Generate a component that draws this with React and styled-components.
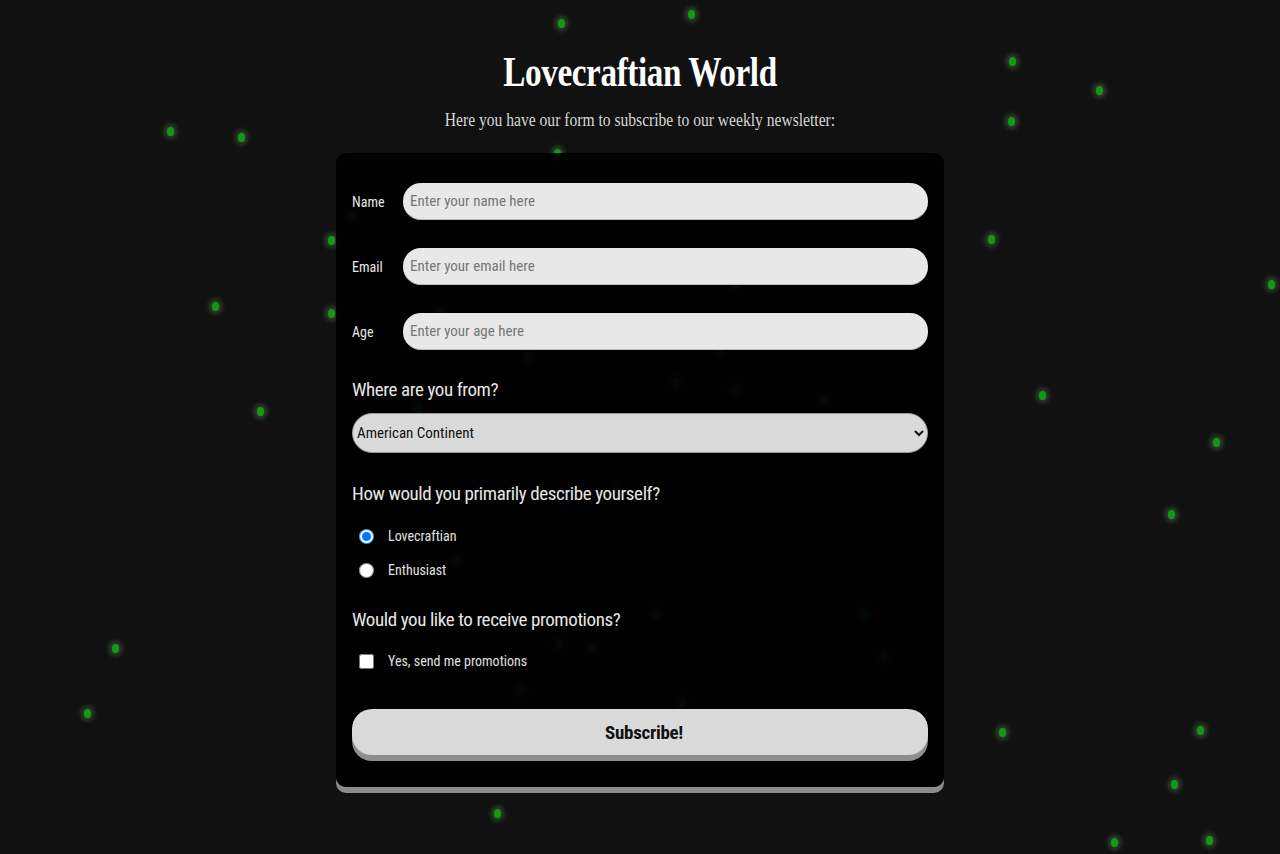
import styled, { createGlobalStyle } from "styled-components";

const GlobalStyle = createGlobalStyle`
  html, body {
    margin: 0;
    padding: 0;
    background: #111111;
  }
  #root {
    min-height: 854px;
  }
`;

// particle positions; dim ones sit behind the form
const dots = [
  [561, 23], [691, 14], [1012, 61], [1099, 90], [170, 131], [241, 137], [1011, 121],
  [557, 153], [991, 239], [331, 240], [1271, 284], [215, 306], [331, 313], [260, 411],
  [1042, 395], [1216, 442], [1171, 514], [115, 648], [87, 713], [1002, 732], [1200, 730],
  [1174, 784], [497, 813], [1114, 842], [1209, 840],
  [352, 216], [440, 312], [735, 283], [720, 348], [527, 356], [676, 381], [734, 389],
  [823, 399], [535, 442], [418, 408], [457, 560], [656, 613], [865, 613], [558, 643],
  [592, 647], [884, 657], [521, 690], [682, 702],
];

const Page = styled.div`
  position: relative;
  min-height: 854px;
  overflow: hidden;
  display: flex;
  flex-direction: column;
  align-items: center;
  font-family: Roboto, "DejaVu Sans Condensed", sans-serif;
  font-stretch: 75%;
`;

const Particles = styled.div`
  position: absolute;
  inset: 0;
  pointer-events: none;
`;

const Dot = styled.span`
  position: absolute;
  width: 7px;
  height: 9px;
  margin: -4px 0 0 -3px;
  border-radius: 50%;
  background: #139a13;
  box-shadow: 0 0 5px 3px rgba(110, 170, 110, 0.35);
`;

const Title = styled.h1`
  position: relative;
  margin: 48px 0 0;
  font-family: "Liberation Serif", "DejaVu Serif", serif;
  font-weight: 700;
  font-size: 42px;
  line-height: 48px;
  letter-spacing: -0.5px;
  color: #ffffff;
  transform: scaleX(0.79);
`;

const Subtitle = styled.p`
  position: relative;
  margin: 12px 0 0;
  font-family: "Liberation Serif", "DejaVu Serif", serif;
  font-size: 19px;
  line-height: 24px;
  color: #d6d6d6;
  transform: scaleX(0.82);
`;

const Form = styled.form`
  position: relative;
  box-sizing: border-box;
  width: 608px;
  margin-top: 21px;
  padding: 30px 16px 32px;
  background: rgba(0, 0, 0, 0.93);
  border-radius: 10px;
  box-shadow: 0 6px 0 #8c8c8c;
`;

const FieldRow = styled.div`
  display: flex;
  align-items: center;
  margin-bottom: 28px;
`;

const Label = styled.label`
  width: 51px;
  flex-shrink: 0;
  font-size: 14px;
  color: #e8e8e8;
`;

const TextInput = styled.input`
  flex: 1;
  height: 37px;
  box-sizing: border-box;
  padding: 0 7px;
  border: none;
  border-bottom: 1px solid #bdbdbd;
  border-radius: 18px;
  background: #e8e8e8;
  font-family: inherit;
  font-stretch: 75%;
  font-size: 15px;
  color: #222;
  outline: none;
  &::placeholder {
    color: #767676;
  }
`;

const Question = styled.p`
  margin: ${p => p.$top || 0}px 0 0;
  font-size: 19px;
  line-height: 24px;
  letter-spacing: -0.4px;
  color: #e6e6e6;
`;

const Select = styled.select`
  display: block;
  width: 100%;
  height: 40px;
  margin-top: 11px;
  padding: 0;
  border: 1px solid #999;
  border-radius: 20px;
  background: #dadada;
  font-family: inherit;
  font-stretch: 75%;
  font-size: 15px;
  color: #111;
`;

const OptionRow = styled.label`
  display: flex;
  align-items: center;
  gap: 14px;
  height: 34px;
  padding-left: 7px;
  font-size: 14px;
  color: #e0e0e0;
  input {
    margin: 0;
    width: 15px;
    height: 15px;
  }
`;

const Options = styled.div`
  margin-top: ${p => p.$top || 12}px;
`;

const Button = styled.button`
  display: block;
  width: 100%;
  height: 46px;
  margin-top: 31px;
  padding: 0 0 0 8px;
  border: none;
  border-radius: 20px;
  background: #dadada;
  box-shadow: 0 6px 0 #8e8e8e;
  font-family: inherit;
  font-stretch: 75%;
  font-weight: 700;
  font-size: 19px;
  letter-spacing: -0.3px;
  color: #111;
  cursor: pointer;
`;

export default function App() {
  return (
    <Page>
      <GlobalStyle />
      <Particles>
        {dots.map(([x, y], i) => (
          <Dot key={i} style={{ left: x, top: y }} />
        ))}
      </Particles>

      <Title>Lovecraftian World</Title>
      <Subtitle>Here you have our form to subscribe to our weekly newsletter:</Subtitle>

      <Form onSubmit={e => e.preventDefault()}>
        <FieldRow>
          <Label htmlFor="name">Name</Label>
          <TextInput id="name" type="text" placeholder="Enter your name here" />
        </FieldRow>
        <FieldRow>
          <Label htmlFor="email">Email</Label>
          <TextInput id="email" type="email" placeholder="Enter your email here" />
        </FieldRow>
        <FieldRow>
          <Label htmlFor="age">Age</Label>
          <TextInput id="age" type="number" placeholder="Enter your age here" />
        </FieldRow>

        <Question $top={2}>Where are you from?</Question>
        <Select defaultValue="america">
          <option value="america">American Continent</option>
          <option value="europe">Europe</option>
          <option value="asia">Asia</option>
        </Select>

        <Question $top={29}>How would you primarily describe yourself?</Question>
        <Options $top={13}>
          <OptionRow>
            <input type="radio" name="kind" defaultChecked />
            Lovecraftian
          </OptionRow>
          <OptionRow>
            <input type="radio" name="kind" />
            Enthusiast
          </OptionRow>
        </Options>

        <Question $top={21}>Would you like to receive promotions?</Question>
        <Options $top={12}>
          <OptionRow>
            <input type="checkbox" />
            Yes, send me promotions
          </OptionRow>
        </Options>

        <Button type="submit">Subscribe!</Button>
      </Form>
    </Page>
  );
}
